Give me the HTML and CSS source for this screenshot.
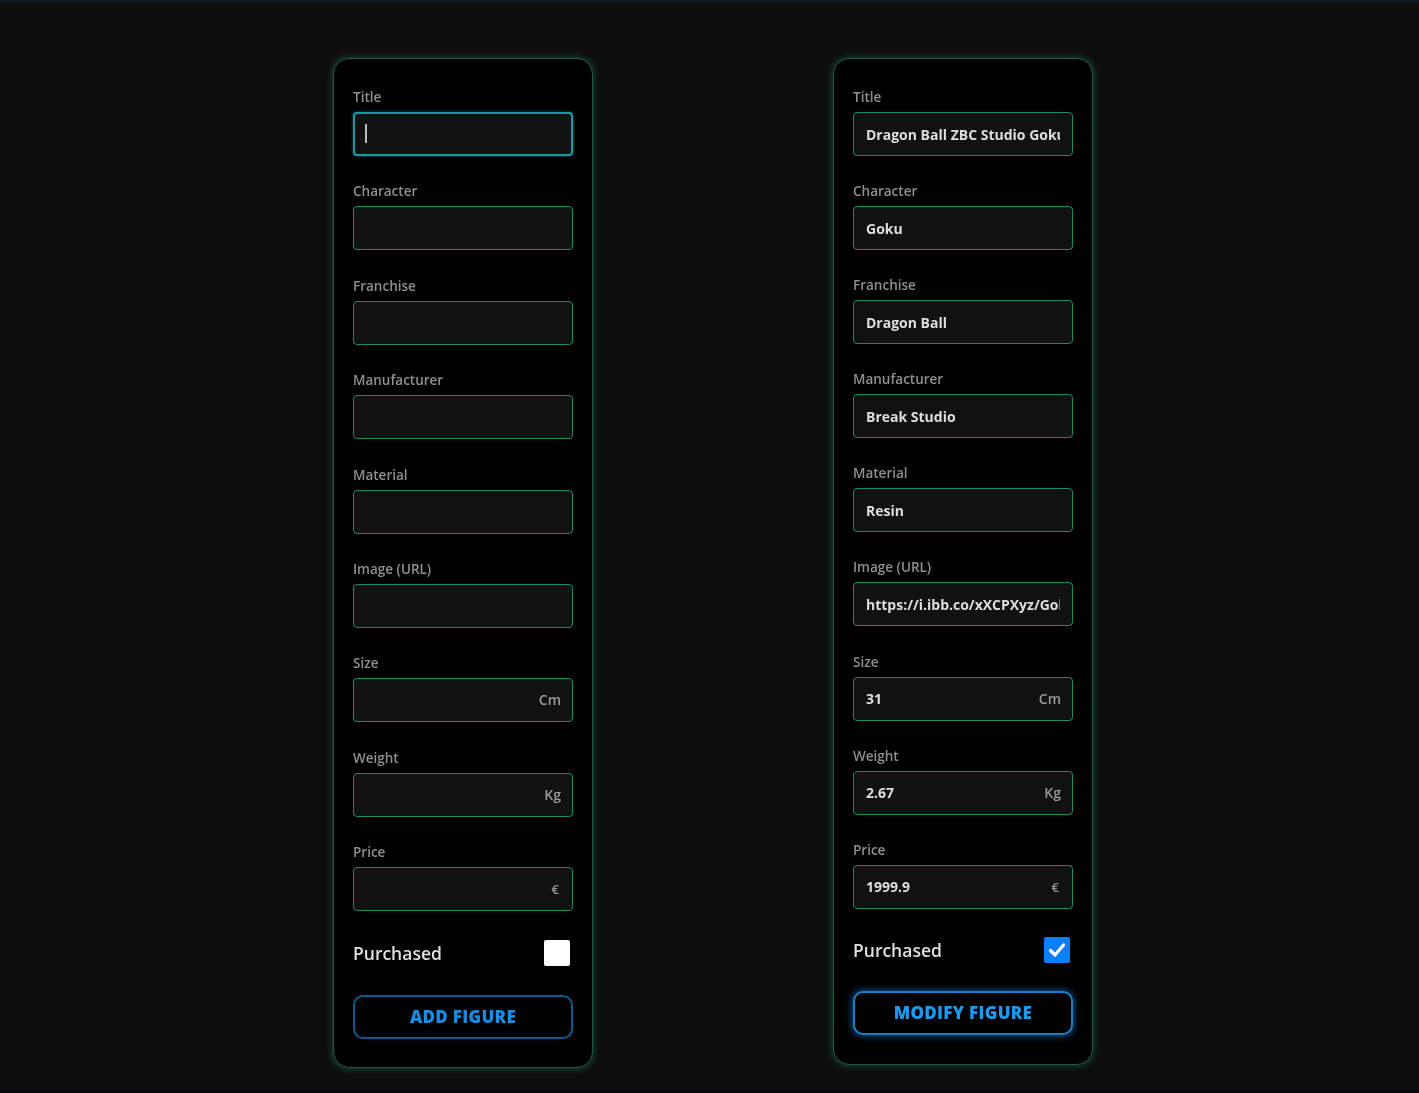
FILE: index.html
```html
<!DOCTYPE html>
<html lang="en">
<head>
<meta charset="utf-8">
<title>Figures</title>
<link rel="stylesheet" href="styles.css">
</head>
<body>
<div class="topline"></div>
<main class="page">
  <form class="card">
    <div class="field">
      <label class="label">Title</label>
      <div class="control">
        <input class="input input--focus" type="text" value="">
        <span class="caret"></span>
      </div>
    </div>
    <div class="field">
      <label class="label">Character</label>
      <div class="control"><input class="input" type="text" value=""></div>
    </div>
    <div class="field">
      <label class="label">Franchise</label>
      <div class="control"><input class="input" type="text" value=""></div>
    </div>
    <div class="field">
      <label class="label">Manufacturer</label>
      <div class="control"><input class="input" type="text" value=""></div>
    </div>
    <div class="field">
      <label class="label">Material</label>
      <div class="control"><input class="input" type="text" value=""></div>
    </div>
    <div class="field">
      <label class="label">Image (URL)</label>
      <div class="control"><input class="input" type="text" value=""></div>
    </div>
    <div class="field">
      <label class="label">Size</label>
      <div class="control"><input class="input" type="text" value=""><span class="unit">Cm</span></div>
    </div>
    <div class="field">
      <label class="label">Weight</label>
      <div class="control"><input class="input" type="text" value=""><span class="unit">Kg</span></div>
    </div>
    <div class="field">
      <label class="label">Price</label>
      <div class="control"><input class="input" type="text" value=""><span class="unit unit--euro">€</span></div>
    </div>
    <div class="check-row">
      <span class="check-label">Purchased</span>
      <span class="checkbox"></span>
    </div>
    <button class="btn" type="button">ADD FIGURE</button>
  </form>

  <form class="card card--tight">
    <div class="field">
      <label class="label">Title</label>
      <div class="control"><input class="input" type="text" value="Dragon Ball ZBC Studio Goku"></div>
    </div>
    <div class="field">
      <label class="label">Character</label>
      <div class="control"><input class="input" type="text" value="Goku"></div>
    </div>
    <div class="field">
      <label class="label">Franchise</label>
      <div class="control"><input class="input" type="text" value="Dragon Ball"></div>
    </div>
    <div class="field">
      <label class="label">Manufacturer</label>
      <div class="control"><input class="input" type="text" value="Break Studio"></div>
    </div>
    <div class="field">
      <label class="label">Material</label>
      <div class="control"><input class="input" type="text" value="Resin"></div>
    </div>
    <div class="field">
      <label class="label">Image (URL)</label>
      <div class="control"><input class="input" type="text" value="https://i.ibb.co/xXCPXyz/Goku.png"></div>
    </div>
    <div class="field">
      <label class="label">Size</label>
      <div class="control"><input class="input" type="text" value="31"><span class="unit">Cm</span></div>
    </div>
    <div class="field">
      <label class="label">Weight</label>
      <div class="control"><input class="input" type="text" value="2.67"><span class="unit">Kg</span></div>
    </div>
    <div class="field">
      <label class="label">Price</label>
      <div class="control"><input class="input" type="text" value="1999.9"><span class="unit unit--euro">€</span></div>
    </div>
    <div class="check-row">
      <span class="check-label">Purchased</span>
      <span class="checkbox checkbox--on">
        <svg viewBox="0 0 26 26" width="26" height="26"><path d="M6.5 13.5 L11 18 L19.5 8" fill="none" stroke="#fff" stroke-width="3.2" stroke-linecap="round" stroke-linejoin="round"/></svg>
      </span>
    </div>
    <button class="btn btn--glow" type="button">MODIFY FIGURE</button>
  </form>
</main>
<div class="bottomstrip"></div>
</body>
</html>
```

FILE: styles.css
```css
* { box-sizing: border-box; }

html, body {
  margin: 0;
  padding: 0;
  background: #0e0e0e;
  height: 1093px;
  overflow: hidden;
  font-family: "Open Sans", "Noto Sans", sans-serif;
}

.topline {
  height: 2px;
  background: #0f1a21;
}

.page {
  display: flex;
  justify-content: center;
  gap: 240px;
  padding-top: 56px;
  padding-left: 7px;
  height: 1088px;
  filter: blur(0.45px);
}

.card {
  width: 260px;
  height: 1010px;
  background: #000;
  border: 1px solid #1c5a43;
  border-radius: 16px;
  box-shadow: 0 0 6px 1px rgba(30, 140, 95, 0.45);
  padding: 29px 19px 0 19px;
  display: flex;
  flex-direction: column;
}

.card--tight {
  height: 1007px;
}

.field {
  display: flex;
  flex-direction: column;
  margin-bottom: 26.4px;
}

.card--tight .field {
  margin-bottom: 26.1px;
}

.label {
  font-size: 13.5px;
  line-height: 18px;
  font-weight: 600;
  color: #8f8f8f;
  margin-bottom: 6px;
}

.control {
  position: relative;
  height: 44px;
}

.input {
  width: 100%;
  height: 44px;
  background: #111;
  border: 1.5px solid #1d8a62;
  border-radius: 4px;
  padding: 0 12px;
  font-family: inherit;
  font-size: 14px;
  font-weight: 700;
  color: #dedede;
  outline: none;
  display: block;
}

.input--focus {
  border: 2px solid #1a9aa2;
  box-shadow: 0 0 3px rgba(30, 160, 170, 0.6);
}

.caret {
  position: absolute;
  left: 12px;
  top: 12px;
  width: 1.5px;
  height: 19px;
  background: #bbb;
}

.unit {
  position: absolute;
  right: 12px;
  top: 0;
  line-height: 44px;
  font-size: 14px;
  font-weight: 600;
  color: #9a9a9a;
}

.unit--euro {
  font-size: 13px;
  right: 14px;
}

.check-row {
  display: flex;
  align-items: center;
  justify-content: space-between;
  height: 26px;
  margin-top: 2px;
  padding-right: 3px;
}

.check-label {
  font-size: 17.5px;
  font-weight: 600;
  color: #e0dede;
}

.checkbox {
  width: 26px;
  height: 26px;
  background: #fff;
  border-radius: 2px;
  display: block;
}

.checkbox--on {
  background: #0b7ffb;
}

.checkbox svg {
  display: block;
}

.btn {
  margin-top: 29px;
  height: 44px;
  width: 100%;
  background: #000;
  border: 2px solid #0b5a8e;
  border-radius: 10px;
  color: #138ee6;
  font-family: inherit;
  font-size: 17px;
  font-weight: 800;
  letter-spacing: 0.3px;
}

.card--tight .btn {
  margin-top: 28px;
}

.btn--glow {
  border-color: #1a7fc2;
  box-shadow: 0 0 7px 1px rgba(20, 130, 230, 0.6);
  color: #1a9af0;
}

.bottomstrip {
  height: 5px;
  background: #05070a;
}
```
